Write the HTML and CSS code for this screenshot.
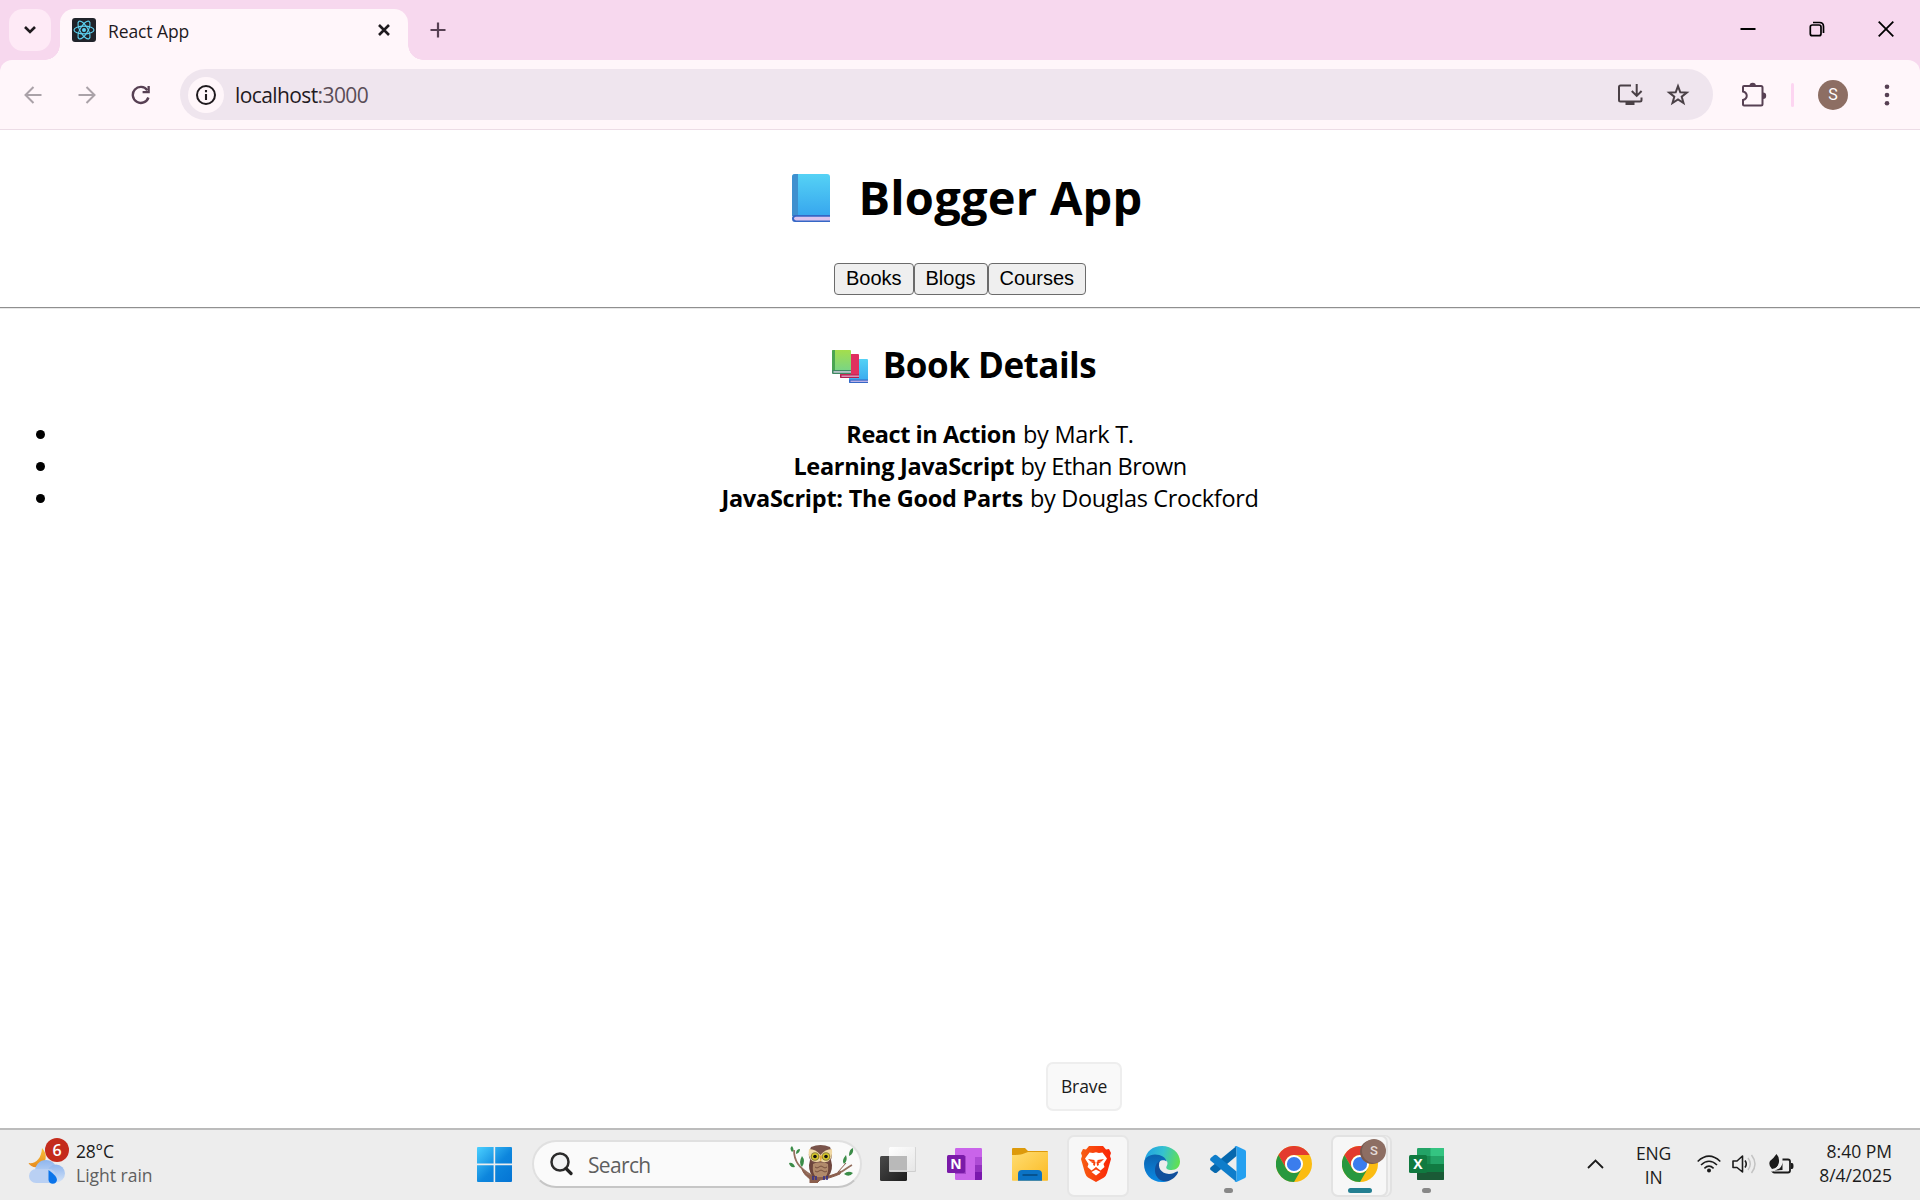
FILE: index.html
```html
<!DOCTYPE html>
<html lang="en">
<head>
<meta charset="utf-8">
<title>React App</title>
<link rel="stylesheet" href="styles.css">
</head>
<body>
<header class="tabstrip">
  <div class="tab-search"><svg width="14" height="10" viewBox="0 0 14 10"><path d="M2 2l5 5 5-5" fill="none" stroke="#1f1a1e" stroke-width="2.6"/></svg></div>
  <div class="tab">
    <svg class="favicon" width="24" height="24" viewBox="0 0 24 24"><rect width="24" height="24" rx="3" fill="#20232a"/><g fill="none" stroke="#5ed3f3" stroke-width="1.1"><ellipse cx="12" cy="12" rx="10" ry="3.9"/><ellipse cx="12" cy="12" rx="10" ry="3.9" transform="rotate(60 12 12)"/><ellipse cx="12" cy="12" rx="10" ry="3.9" transform="rotate(120 12 12)"/></g><circle cx="12" cy="12" r="2" fill="#5ed3f3"/></svg>
    <span class="tab-title">React App</span>
    <svg class="tab-close" width="14" height="14" viewBox="0 0 14 14"><path d="M2 2l10 10M12 2L2 12" stroke="#1f1a1e" stroke-width="2.6"/></svg>
  </div>
  <svg class="new-tab" width="16" height="16" viewBox="0 0 16 16"><path d="M8 .5v15M.5 8h15" stroke="#574053" stroke-width="2.2"/></svg>
  <div class="window-buttons">
    <svg width="16" height="16" viewBox="0 0 16 16"><path d="M.5 8h15" stroke="#000" stroke-width="2"/></svg>
    <svg width="16" height="16" viewBox="0 0 16 16"><g fill="none" stroke="#000" stroke-width="1.7"><rect x="1.3" y="4" width="10.7" height="10.7" rx="2"/><path d="M4 1.5h6.5q4 0 4 4V12"/></g></svg>
    <svg width="16" height="16" viewBox="0 0 16 16"><path d="M.7.7l14.6 14.6M15.3.7L.7 15.3" stroke="#000" stroke-width="1.8"/></svg>
  </div>
</header>
<div class="toolbar-back">
<nav class="toolbar">
  <svg class="nav-icon" width="18" height="18" viewBox="0 0 18 18"><path d="M17.5 9H1.7M9.5 1L1.5 9l8 8" fill="none" stroke="#aaa2a8" stroke-width="2"/></svg>
  <svg class="nav-icon" width="18" height="18" viewBox="0 0 18 18"><path d="M.5 9h15.800M8.500 1l8 8-8 8" fill="none" stroke="#aaa2a8" stroke-width="2"/></svg>
  <svg class="nav-icon reload" width="20" height="20" viewBox="0 0 20 20"><path d="M17.4 12.5A8 8 0 1 1 16.3 5.2" fill="none" stroke="#574053" stroke-width="2.4"/><path d="M18.8 1v7.2h-7.2V6h4.9V1z" fill="#574053"/></svg>
  <div class="omnibox">
    <span class="site-info"><svg width="20" height="20" viewBox="0 0 20 20"><circle cx="10" cy="10" r="9" fill="none" stroke="#1f1a1e" stroke-width="2"/><path d="M10 9v6M10 5v2.2" stroke="#1f1a1e" stroke-width="2.1"/></svg></span>
    <span class="url">localhost<i>:3000</i></span>
    <svg class="install" width="26" height="24" viewBox="0 0 26 24"><path d="M14 2.5H3.500q-1.500 0-1.500 1.500V17q0 1.500 1.500 1.500H23q1.500 0 1.500-1.500v-2.500" fill="none" stroke="#4a4046" stroke-width="2"/><path d="M8.500 18.500h9v3.500h-9z" fill="#4a4046"/><path d="M19.700 1v11M14.800 8l4.900 4.900L24.600 8" fill="none" stroke="#4a4046" stroke-width="2"/></svg>
    <svg class="star" width="24" height="24" viewBox="0 0 24 24"><path d="M12 3.200l2.300 6.100 6.500.3-5.100 4.100 1.800 6.300-5.500-3.600L6.500 20l1.800-6.300-5.100-4.100 6.500-.3z" fill="none" stroke="#4a4046" stroke-width="2"/></svg>
  </div>
  <svg class="extensions" width="26" height="26" viewBox="0 0 26 26"><path d="M3 4h17q1.500 0 1.500 1.500V22q0 1.500-1.500 1.500H3q-1 0-1-1V18c5-1.500 5-7 0-8.500V5q0-1 1-1z" fill="none" stroke="#574053" stroke-width="2"/><path d="M8.500 4a3.200 3.200 0 0 1 6.400 0zM22 10.500a3.200 3.200 0 0 1 0 6.400z" fill="#574053"/></svg>
  <span class="divider"></span>
  <span class="avatar">S</span>
  <svg class="menu" width="6" height="22" viewBox="0 0 6 22"><g fill="#574053"><circle cx="3" cy="2.800" r="2.300"/><circle cx="3" cy="11" r="2.300"/><circle cx="3" cy="19.200" r="2.300"/></g></svg>
</nav>
</div>
<main class="page">
  <h1><svg width="38" height="48" viewBox="0 0 38 48"><defs><linearGradient id="blue" x1="0" y1="0" x2="0" y2="1"><stop offset="0" stop-color="#55d2f5"/><stop offset="1" stop-color="#37a6ee"/></linearGradient></defs><path d="M3 0h32q3 0 3 3v39H0V3q0-3 3-3z" fill="url(#blue)"/><path d="M3 0h3v42H0V3q0-3 3-3z" fill="#3f90cf"/><path d="M3 41h35v7H3q-3 0-3-3.500T3 41z" fill="#3567c6"/><path d="M4 42.800h34v3.600H4q-2-.2-2-1.800t2-1.800z" fill="#dcc3ee"/></svg><span>Blogger App</span></h1>
  <div class="choices"><button>Books</button><button>Blogs</button><button>Courses</button></div>
  <hr>
  <h2><svg width="36" height="33" viewBox="0 0 36 33"><defs><linearGradient id="green" x1="0" y1="0" x2="0" y2="1"><stop offset="0" stop-color="#a4de4c"/><stop offset="1" stop-color="#74d38c"/></linearGradient></defs><path d="M17 9h18q1 0 1 1v23H18q-1 0-1-1z" fill="url(#blue)"/><path d="M17 29.500h19V33H18q-1 0-1-1z" fill="#3567c6"/><path d="M18.500 30.700H36v1.100H18.500z" fill="#dcc3ee"/><path d="M8 4h18q1 0 1 1v23H9q-1 0-1-1z" fill="#e0305f"/><path d="M8 24.500h19V28H9q-1 0-1-1z" fill="#b01e50"/><path d="M9.500 25.600H27v1.100H9.500z" fill="#f0c3de"/><path d="M1 0h17q1 0 1 1v22H1q-1 0-1-1V1q0-1 1-1z" fill="url(#green)"/><path d="M1 0h2v21H0V1q0-1 1-1z" fill="#4aa552"/><path d="M0 20h19v4H1q-1 0-1-1z" fill="#3f8a62"/><path d="M1.500 21.300H19v1.300H1.500z" fill="#e6d8f2"/></svg><span>Book Details</span></h2>
  <ul>
    <li><b class="title-react">React in Action</b> <span class="author-mark">by Mark T.</span></li>
    <li><b class="title-learning">Learning JavaScript</b> <span class="author-ethan">by Ethan Brown</span></li>
    <li><b class="title-parts">JavaScript: The Good Parts</b> <span class="author-douglas">by Douglas Crockford</span></li>
  </ul>
</main>
<footer class="taskbar">
  <div class="weather">
    <div class="weather-icon">
      <svg width="38" height="40" viewBox="0 0 38 40"><defs><linearGradient id="moon" x1="0" y1="0" x2="0" y2="1"><stop offset="0" stop-color="#f8c43c"/><stop offset="1" stop-color="#e88a1c"/></linearGradient><linearGradient id="cloud" x1="0" y1="0" x2="0" y2="1"><stop offset="0" stop-color="#8fb6ee"/><stop offset="1" stop-color="#d3e2f7"/></linearGradient></defs><path d="M14 4c6 6 5 16-4 19-4 1-8-1-9.500-4 7 1 13-4 13.500-15z" fill="url(#moon)"/><circle cx="18" cy="27" r="11" fill="url(#cloud)"/><circle cx="28" cy="29.500" r="9" fill="url(#cloud)"/><rect x="1" y="25" width="27" height="14" rx="7" fill="#b9d0f3"/><path d="M20.500 26q8.500 6 8.500 10a4.300 4.300 0 0 1-8.500 0z" fill="#0a74ea"/></svg>
      <span class="alert">6</span>
    </div>
    <div class="weather-text"><span class="temp">28°C</span><span class="cond">Light rain</span></div>
  </div>
  <svg class="start" width="35" height="35" viewBox="0 0 35 35"><defs><linearGradient id="win" x1="0" y1="0" x2="1" y2="1"><stop offset="0" stop-color="#4bd0ff"/><stop offset=".55" stop-color="#0d86dd"/><stop offset="1" stop-color="#0474d4"/></linearGradient></defs><path d="M1 0h15.600v16.600H0V1q0-1 1-1zM18.200 0H34q1 0 1 1v15.600H18.200zM0 18.200h16.600V35H1q-1 0-1-1zM18.200 18.200H35V34q0 1-1 1H18.200z" fill="url(#win)"/></svg>
  <div class="search">
    <svg width="23" height="24" viewBox="0 0 23 24"><circle cx="10" cy="10" r="8.500" fill="#f1f2f3" stroke="#2a2a2a" stroke-width="2.500"/><path d="M16 16.500l5 5" stroke="#222" stroke-width="3.200" stroke-linecap="round"/></svg>
    <span class="search-text">Search</span>
    <svg class="owl" width="66" height="38" viewBox="0 0 66 38"><path d="M6 5c0 11 5 18 17 25 9 5 20 1 28-2 5-2 9-6 13-8" fill="none" stroke="#95705f" stroke-width="1.800"/><path d="M14 24c4 5 8 7 14 8 9 2 18-2 25-6l-1 3c-7 3-14 5-20 6l-3 3h-7v-4c-4-3-7-6-8-10zM50 27l8-9" fill="#8b5f4d" stroke="#8b5f4d"/><path d="M22 15h21q3 10-3 17H25q-6-7-3-17z" fill="#6d453c"/><path d="M25 19q8-5 15 0 1 10-3 13h-9q-4-3-3-13z" fill="#b18a6b"/><path d="M27 22q2 2 4 0t4 0 4 0M27 26q2 2 4 0t4 0 4 0" fill="none" stroke="#78513f"/><path d="M23 2q9.500-4 19 0 4.500 10-1 15.500H24.500Q18 12 23 2z" fill="#79534a"/><path d="M21 4q7 0 11.500 6Q37 4 44 4q1 9-4 12.500-5 1.500-7.500-.5-4 2-8 0-5-4-3.500-12z" fill="#f0d8a4"/><circle cx="27" cy="11.500" r="4.300" fill="#8a8236"/><circle cx="38" cy="11.500" r="4.300" fill="#8a8236"/><circle cx="27" cy="11.500" r="3.200" fill="#d9c928"/><circle cx="38" cy="11.500" r="3.200" fill="#d9c928"/><circle cx="27" cy="11.500" r="1.800" fill="#111"/><circle cx="38" cy="11.500" r="1.800" fill="#111"/><path d="M31 10.500h3.500l-1.700 6.500z" fill="#e2a93b"/><path d="M25 31v4M28 31v4M36 31v4M39 31v4" stroke="#36328c" stroke-width="1.600"/><g fill="#3b8c48"><path d="M4 7q-3-4 0-6 3 4 0 6zM8 9q0-5 4-5 0 4-4 5zM14 22q-4-4 0-11 4 5 0 11zM1 18q4-1 6 4-5 1-6-4zM56 19q-3-3 2-9 2 6-2 9zM61 11q0-7 4-8 1 6-4 8zM56 29q4-4 9-1-4 5-9 1z"/></g></svg>
  </div>
  <div class="apps">
    <span class="app"><svg width="36" height="36" viewBox="0 0 36 36"><defs><linearGradient id="tv" x1="0" y1="0" x2="1" y2="1"><stop offset="0" stop-color="#4a4a4a"/><stop offset="1" stop-color="#1d1d1d"/></linearGradient><linearGradient id="glass" x1="0" y1="0" x2="1" y2="1"><stop offset="0" stop-color="#fff"/><stop offset="1" stop-color="#e6e6e6"/></linearGradient></defs><rect y="10" width="27" height="25" rx="1.500" fill="url(#tv)"/><rect x="9" y="1" width="27" height="25" rx="1" fill="#cfcfcf"/><rect x="9" y="1" width="26.200" height="24" rx="1" fill="url(#glass)"/><path d="M9 10h18v14.500H9z" fill="#b9b9b9"/></svg></span>
    <span class="app"><svg width="36" height="36" viewBox="0 0 36 36"><rect x="9" y="2" width="27" height="32" rx="1.200" fill="#c964ea"/><path d="M29 11h7v8h-7z" fill="#ae4bd5"/><path d="M29 19h7v7h-7z" fill="#9332bf"/><path d="M29 26h7v7q0 1-1 1h-6z" fill="#7a18ad"/><path d="M9 10h11v18H9z" fill="#a545ca"/><rect x="1" y="9" width="18" height="18" rx="1.500" fill="#7a1aa8"/><text x="10" y="23.300" text-anchor="middle" class="glyph">N</text></svg></span>
    <span class="app"><svg width="36" height="36" viewBox="0 0 36 36"><defs><linearGradient id="fold" x1="0" y1="0" x2="1" y2="1"><stop offset="0" stop-color="#ffdd71"/><stop offset="1" stop-color="#fbba23"/></linearGradient></defs><path d="M1 2h12l3 3h19q1 0 1 1v4H0V3q0-1 1-1z" fill="#dd9a0b"/><path d="M0 9q9 0 12-1.500L16 6h20v28q0 .7-.7.700H.7Q0 34.700 0 34z" fill="url(#fold)"/><path d="M6 34.700V28q0-4 4-4h16q4 0 4 4v6.700z" fill="#0b73c5"/><path d="M10.500 29h15" stroke="#064b83" stroke-width="1.600"/></svg></span>
    <span class="app hover"><svg width="36" height="36" viewBox="0 0 36 36"><defs><linearGradient id="brave" x1="0" x2="1"><stop offset="0" stop-color="#f75e12"/><stop offset="1" stop-color="#fb2507"/></linearGradient></defs><path d="M11 0h14l3 3.500 3-.5 2 4-1 3 1 3-4 14q-1 3-3 4.500L18 36l-8-4.500Q8 30 7 27L3 13l1-3-1-3 2-4 3 .5z" fill="url(#brave)"/><path d="M11.500 6.500L15 7l3-.8 3 .8 3.500-.5 4.500 6-3.500 5.500 1 3-4 3.500-4-3 .5-1.500 2-1-.5-1.500 3.500-2-4-.5-1.500 1 .7 4.500-1.200.8-1.200-.8.7-4.500-1.500-1-4 .5 3.500 2-.5 1.500 2 1 .5 1.500-4 3-4-3.500 1-3L7 12.500zM18 23.500l4.500 2.500-4.500 3.500-4.500-3.500z" fill="#fff"/><path d="M10 13l6.500 1v1.300L12 15zM26 13l-6.500 1v1.300L24 15z" fill="#f9430d"/></svg></span>
    <span class="app"><svg width="36" height="36" viewBox="0 0 36 36"><defs><linearGradient id="e1" x1="0" y1=".3" x2="1" y2=".5"><stop offset="0" stop-color="#20a0e4"/><stop offset=".5" stop-color="#35c1cf"/><stop offset="1" stop-color="#61e053"/></linearGradient><linearGradient id="e2" x1="0" y1="0" x2="0" y2="1"><stop offset="0" stop-color="#0c62ae"/><stop offset="1" stop-color="#0a8ae4"/></linearGradient></defs><path d="M.5 15C2 5 9 0 18 0c10 0 18 7 18 15.500 0 5-3.500 8.500-8.500 8.500-4 0-6-1.500-5-3.500 3-5-1-8-6-8C9 12.500 3 17 .5 15z" fill="url(#e1)"/><path d="M0 18C0 12 5 8.500 11 8.500c6 0 11 3 11.500 7C20 13 14 14 13 20c-1 8 4 14 10 15-2 1-4 1-5 1C7 36 0 28 0 18z" fill="url(#e2)"/><path d="M16 14.500c-3 7 1 13 9 13.500 3 0 6-1.500 8-2.500 1-.4 1.300.5 1 1C32 31 27 35 22 35.500 14 35 10.500 29 11 23c.3-4 2.500-7 5-8.500z" fill="#104f9c"/></svg></span>
    <span class="app running"><svg width="36" height="36" viewBox="0 0 36 36"><path d="M26.500 0v10L7 26.500q-1.500 1-3 0L.7 24q-1.200-1.300 0-2.700z" fill="#0668ae"/><path d="M.7 12L4 9.200q1.500-.8 3 .2l19.500 16V36L.7 14.700q-1.200-1.300 0-2.700z" fill="#0f7dca"/><path d="M26.500 0L35 4q1 .5 1 1.700v24.600q0 1.200-1 1.700l-8.500 4q-1.500 0-2-1 2 .5 2-1.500v-31q0-2-2-1.500.5-1 2-1z" fill="#25a0f0"/></svg></span>
    <span class="app"><svg width="36" height="36" viewBox="0 0 36 36"><g id="chrome"><circle cx="18" cy="18" r="18" fill="#fbbc12"/><path d="M2.400 9A18 18 0 0 1 33.600 9H18a9 9 0 0 0-7.800 13.500z" fill="#e33b2e"/><path d="M2.400 9A18 18 0 0 0 18 36l7.800-13.500A9 9 0 0 1 10.200 22.500z" fill="#28983f"/><circle cx="18" cy="18" r="9" fill="#fff"/><circle cx="18" cy="18" r="7.100" fill="#3b7ded"/></g></svg></span>
    <span class="app active"><svg width="36" height="36" viewBox="0 0 36 36"><use href="#chrome"/></svg><span class="profile">S</span></span>
    <span class="app running"><svg width="36" height="36" viewBox="0 0 36 36"><rect x="9" y="2" width="27" height="32" rx="1.200" fill="#23a366"/><path d="M22.500 2H35q1 0 1 1v7H22.500z" fill="#34c481"/><path d="M9 10h13.500v8H9z" fill="#178a4f"/><path d="M9 18h27v8H9z" fill="#117b42"/><path d="M9 26h27v7q0 1-1 1H10q-1 0-1-1z" fill="#1a5a36"/><rect x="1" y="9" width="18" height="18" rx="1.500" fill="#107a40"/><text x="10" y="23.300" text-anchor="middle" class="glyph">X</text></svg></span>
  </div>
  <div class="tray">
    <svg class="chev" width="17" height="10" viewBox="0 0 17 10"><path d="M1 9l7.500-7.500L16 9" fill="none" stroke="#1b1b1b" stroke-width="1.800"/></svg>
    <div class="lang"><span>ENG</span><span>IN</span></div>
    <svg class="wifi" width="24" height="18" viewBox="0 0 24 18"><g fill="none" stroke="#1b1b1b" stroke-width="1.600"><path d="M.7 6.500q11.300-10.600 22.600 0M4 10q8-7.500 16 0M7.400 13.300q4.600-4.300 9.200 0"/></g><circle cx="12" cy="15.500" r="2" fill="#1b1b1b"/></svg>
    <svg class="vol" width="25" height="20" viewBox="0 0 25 20"><path d="M1 7h4l5.500-5v16L5 13.500H1zM13 6.500q2.500 3.500 0 7" fill="none" stroke="#1b1b1b" stroke-width="1.600" stroke-linejoin="round"/><path d="M16 4q4.500 6 0 12M19.500 1q7 9 0 18" fill="none" stroke="#c3c3c3" stroke-width="1.500"/></svg>
    <svg class="batt" width="25" height="20" viewBox="0 0 25 20"><path d="M13.500 5.500H19q2 0 2 2v9q0 2-2 2H5.500q-2 0-2-1.500" fill="none" stroke="#1b1b1b" stroke-width="1.800"/><path d="M22 9h1q1.500 0 1.500 3T23 15h-1zM7.500 0q3 3 2.500 8-.5 6-7 7-4-4-2-8 3-2 6.500-7z" fill="#1b1b1b"/><path d="M13.500 5.500q.5 6-3 9l-5 2 8-.5V9z" fill="#1b1b1b"/><path d="M3 17q5-1 7.500-7" fill="none" stroke="#ededed" stroke-width="1.300"/></svg>
    <div class="clock"><span>8:40 PM</span><span>8/4/2025</span></div>
  </div>
</footer>
<div class="tooltip">Brave</div>
</body>
</html>
```
FILE: styles.css
```css
* { box-sizing: border-box; }
body { margin: 0; height: 1200px; display: flex; flex-direction: column; overflow: hidden; background: #fff; color: #000; font-family: "Open Sans", "Noto Sans", sans-serif; }
svg { display: block; flex: none; }

.tabstrip { height: 60px; flex: none; display: flex; align-items: flex-start; padding: 9px 17px 0 9px; background: #f7d8ee; }
.tab-search { width: 42px; height: 42px; border-radius: 14px; background: #feeaf6; display: grid; place-items: center; }
.tab { position: relative; width: 348px; height: 51px; margin-left: 9px; padding: 9px 17px 0 12px; display: flex; align-items: flex-start; border-radius: 14px 14px 0 0; background: #fff6fa; }
.tab::before, .tab::after { content: ""; position: absolute; bottom: 0; width: 15px; height: 15px; }
.tab::before { left: -15px; background: radial-gradient(circle at 0 0, transparent 14.5px, #fff6fa 15px); }
.tab::after { right: -15px; background: radial-gradient(circle at 100% 0, transparent 14.5px, #fff6fa 15px); }
.tab-title { margin-left: 12px; font-size: 17.5px; line-height: 27px; letter-spacing: -.1px; color: #1f1a1e; }
.tab-close { margin: 5px 0 0 auto; }
.new-tab { margin: 13px 0 0 22px; }
.window-buttons { display: flex; gap: 53px; margin: 12px 9px 0 auto; }

.toolbar-back { height: 70px; flex: none; background: #f7d8ee; }
.toolbar { height: 70px; display: flex; align-items: center; padding: 0 30px 0 24px; border-bottom: 1px solid #ecdce6; border-radius: 12px 12px 0 0; background: #fff6fa; }
.nav-icon { margin-right: 36px; }
.nav-icon.reload { margin-left: -1px; }
.omnibox { flex: 1; height: 51px; margin-left: -7px; padding: 0 23px 0 8px; display: flex; align-items: center; border-radius: 26px; background: #efe5ee; }
.site-info { width: 36px; height: 36px; border-radius: 50%; display: grid; place-items: center; background: #fff6fa; }
.url { margin-left: 11px; font-size: 21px; line-height: 30px; letter-spacing: -.6px; color: #1f1a1e; }
.url i { font-style: normal; color: #5a4d57; }
.install { margin-left: auto; }
.star { margin-left: 23px; }
.extensions { margin-left: 28px; }
.divider { width: 3px; height: 24px; margin-left: 24px; border-radius: 2px; background: #fdd5f1; }
.avatar { width: 30px; height: 30px; margin-left: 24px; border-radius: 50%; background: #8d6e63; color: #fff; font: 16px/30px Roboto, sans-serif; text-align: center; }
.menu { margin-left: 36px; }

.page { flex: 1; min-height: 0; text-align: center; font-size: 23.5px; line-height: 32px; }
.page h1, .page h2 { display: flex; justify-content: center; align-items: center; }
.page h1 svg, .page h2 svg { margin-top: 2px; }
.page h1 { gap: 28px; height: 64px; margin: 35px 0 34px; padding-left: 15px; font-size: 47px; line-height: 64px; letter-spacing: .25px; }
.page h2 { gap: 15px; height: 48px; margin: 32px 0 29px; padding-left: 8px; font-size: 35px; line-height: 48px; letter-spacing: -.5px; }
.choices { display: flex; justify-content: center; }
.choices button { height: 32px; padding: 0 11px 2px; border: 1px solid #6b6b6b; border-radius: 4px; background: #efefef; color: #000; font: 20px/28px "Liberation Sans", Arial, sans-serif; }
.page hr { margin: 12px 0 0; height: 2px; border: 0; border-top: 1px solid #8f8f8f; border-bottom: 1px solid #e8e8e8; }
.page ul { margin: 0; padding-left: 60px; list-style: none; }
.page li { position: relative; height: 32px; white-space: nowrap; }
.page li::before { content: ""; position: absolute; left: -24px; top: 12px; width: 9px; height: 9px; border-radius: 50%; background: #000; }
.title-react { letter-spacing: -.45px; }
.title-learning { letter-spacing: -.32px; }
.title-parts { letter-spacing: -.25px; }
.author-mark { margin-left: 1px; letter-spacing: -.3px; }
.author-ethan { letter-spacing: -.5px; }
.author-douglas { margin-left: 1px; letter-spacing: -.32px; }

.taskbar { height: 72px; flex: none; display: flex; align-items: center; border-top: 2px solid #bcbcbc; background: #ededed; padding-bottom: 2px; color: #1b1b1b; font-size: 17.5px; line-height: 24px; }
.weather { width: 448px; padding-left: 28px; display: flex; align-items: center; }
.weather-icon { position: relative; }
.alert { position: absolute; left: 17px; top: -6px; width: 24px; height: 24px; border-radius: 50%; background: #c42b1c; color: #fff; font-size: 16px; font-weight: 600; line-height: 24px; text-align: center; }
.weather-text { margin: -2px 0 0 10px; display: flex; flex-direction: column; align-items: flex-start; }
.temp { letter-spacing: -.2px; }
.cond { color: #5f5f5f; }
.start { margin-left: 29px; }
.search { width: 330px; height: 48px; margin-left: 20px; padding: 0 6px 0 16px; display: flex; align-items: center; border: 2px solid #e0e0e0; border-bottom-color: #c6c6c6; border-radius: 24px; background: #fafafa; }
.search-text { margin: 1px 0 0 15px; font-size: 21px; line-height: 30px; letter-spacing: -.65px; color: #5f5f5f; }
.owl { margin-left: auto; }
.apps { display: flex; margin-left: 3px; }
.app { position: relative; width: 66px; height: 60px; display: grid; place-items: center; }
.app svg { position: relative; }
.glyph { fill: #fff; font: 700 14px "Open Sans", sans-serif; }
.hover::before, .active::before { content: ""; position: absolute; left: 4px; top: 1px; width: 58px; height: 58px; border: 2px solid #e6e6e6; border-radius: 7px; background: #f7f7f7; }
.active::before { border-color: #e2e2e2; width: 53px; box-shadow: 3px 0 0 -1px #f1f1f1, 4px 0 0 0 #e2e2e2; }
.running::after, .active::after { content: ""; position: absolute; left: 29px; bottom: 1px; width: 9px; height: 5px; border-radius: 3px; background: #888; }
.active::after { left: 21px; width: 24px; background: #237f92; }
.profile { position: absolute; left: 35px; top: 5px; width: 24px; height: 24px; border-radius: 50%; background: #8d6e63; box-shadow: -2px 1px 0 #77594f; color: #e5dcd9; font: 500 13px/24px Roboto, sans-serif; text-align: center; }
.tray { margin-left: auto; padding-right: 28px; display: flex; align-items: center; }
.lang { margin: 1px 0 0 32px; display: flex; flex-direction: column; align-items: center; letter-spacing: -.2px; }
.wifi { margin-left: 26px; }
.vol { margin-left: 11px; }
.batt { margin-left: 12px; }
.clock { margin: -2px 0 0 25px; display: flex; flex-direction: column; align-items: flex-end; }

.tooltip { position: absolute; left: 1046px; top: 1062px; width: 76px; height: 49px; padding-bottom: 2px; border: 2px solid #eee; border-radius: 7px; background: #f9f9f9; display: grid; place-items: center; font-size: 17.5px; line-height: 24px; letter-spacing: -.1px; color: #1b1b1b; }
```
